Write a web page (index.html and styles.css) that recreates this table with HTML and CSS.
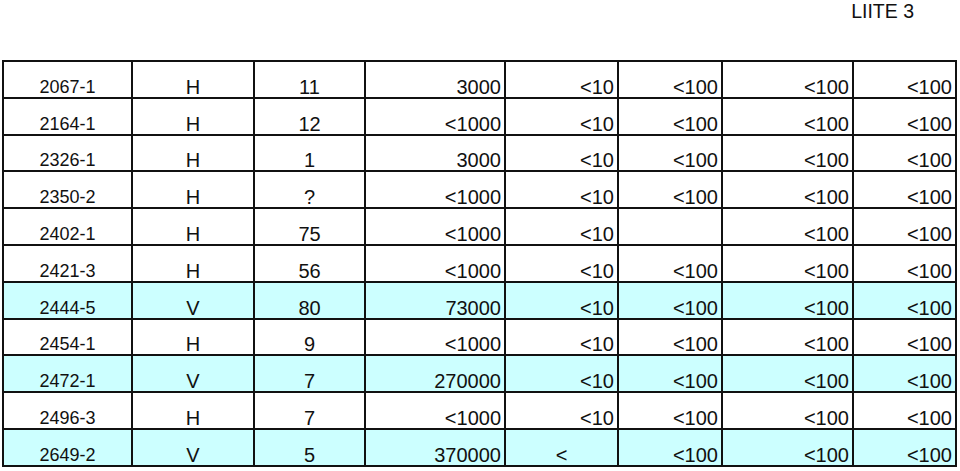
FILE: index.html
```html
<!DOCTYPE html>
<html>
<head>
<meta charset="utf-8">
<link rel="stylesheet" href="styles.css">
</head>
<body>
<div class="header"><span class="liite">LIITE 3</span></div>
<table class="data">
<colgroup>
<col class="c1"><col class="c2"><col class="c3"><col class="c4"><col class="c5"><col class="c6"><col class="c7"><col class="c8">
</colgroup>
<tbody>
<tr><td class="id">2067-1</td><td class="ctr">H</td><td class="ctr">11</td><td>3000</td><td>&lt;10</td><td>&lt;100</td><td>&lt;100</td><td>&lt;100</td></tr>
<tr><td class="id">2164-1</td><td class="ctr">H</td><td class="ctr">12</td><td>&lt;1000</td><td>&lt;10</td><td>&lt;100</td><td>&lt;100</td><td>&lt;100</td></tr>
<tr><td class="id">2326-1</td><td class="ctr">H</td><td class="ctr">1</td><td>3000</td><td>&lt;10</td><td>&lt;100</td><td>&lt;100</td><td>&lt;100</td></tr>
<tr><td class="id">2350-2</td><td class="ctr">H</td><td class="ctr">?</td><td>&lt;1000</td><td>&lt;10</td><td>&lt;100</td><td>&lt;100</td><td>&lt;100</td></tr>
<tr><td class="id">2402-1</td><td class="ctr">H</td><td class="ctr">75</td><td>&lt;1000</td><td>&lt;10</td><td></td><td>&lt;100</td><td>&lt;100</td></tr>
<tr><td class="id">2421-3</td><td class="ctr">H</td><td class="ctr">56</td><td>&lt;1000</td><td>&lt;10</td><td>&lt;100</td><td>&lt;100</td><td>&lt;100</td></tr>
<tr class="hl"><td class="id">2444-5</td><td class="ctr">V</td><td class="ctr">80</td><td>73000</td><td>&lt;10</td><td>&lt;100</td><td>&lt;100</td><td>&lt;100</td></tr>
<tr><td class="id">2454-1</td><td class="ctr">H</td><td class="ctr">9</td><td>&lt;1000</td><td>&lt;10</td><td>&lt;100</td><td>&lt;100</td><td>&lt;100</td></tr>
<tr class="hl"><td class="id">2472-1</td><td class="ctr">V</td><td class="ctr">7</td><td>270000</td><td>&lt;10</td><td>&lt;100</td><td>&lt;100</td><td>&lt;100</td></tr>
<tr><td class="id">2496-3</td><td class="ctr">H</td><td class="ctr">7</td><td>&lt;1000</td><td>&lt;10</td><td>&lt;100</td><td>&lt;100</td><td>&lt;100</td></tr>
<tr class="hl"><td class="id">2649-2</td><td class="ctr">V</td><td class="ctr">5</td><td>370000</td><td class="ctr">&lt;</td><td>&lt;100</td><td>&lt;100</td><td>&lt;100</td></tr>
</tbody>
</table>
</body>
</html>
```
FILE: styles.css
```css
html, body {
  margin: 0;
  padding: 0;
  background: #ffffff;
  font-family: "Liberation Sans", Arial, sans-serif;
  color: #111111;
}
.header {
  height: 60px;
  box-sizing: border-box;
  padding-top: 1px;
  padding-right: 46px;
  text-align: right;
}
.liite {
  font-size: 19.5px;
  line-height: 21px;
}
.data {
  margin-left: 2px;
  width: 955px;
  table-layout: fixed;
  border-collapse: collapse;
  border: 2px solid #111111;
}
.c1 { width: 129px; }
.c2 { width: 122px; }
.c3 { width: 111px; }
.c4 { width: 140px; }
.c5 { width: 113px; }
.c6 { width: 104px; }
.c7 { width: 131px; }
.c8 { width: 103px; }
.data tr {
  height: 36.8px;
}
.data td {
  border: 2px solid #111111;
  font-size: 20px;
  line-height: 18px;
  padding: 0 3px 1px 0;
  text-align: right;
  vertical-align: bottom;
  white-space: nowrap;
  overflow: hidden;
}
.data td.id {
  font-size: 18px;
  text-align: center;
  padding: 0 0 1px 0;
}
.data td.ctr {
  text-align: center;
  padding: 0 0 1px 0;
}
.data tr.hl td {
  background: #ccffff;
}
```
